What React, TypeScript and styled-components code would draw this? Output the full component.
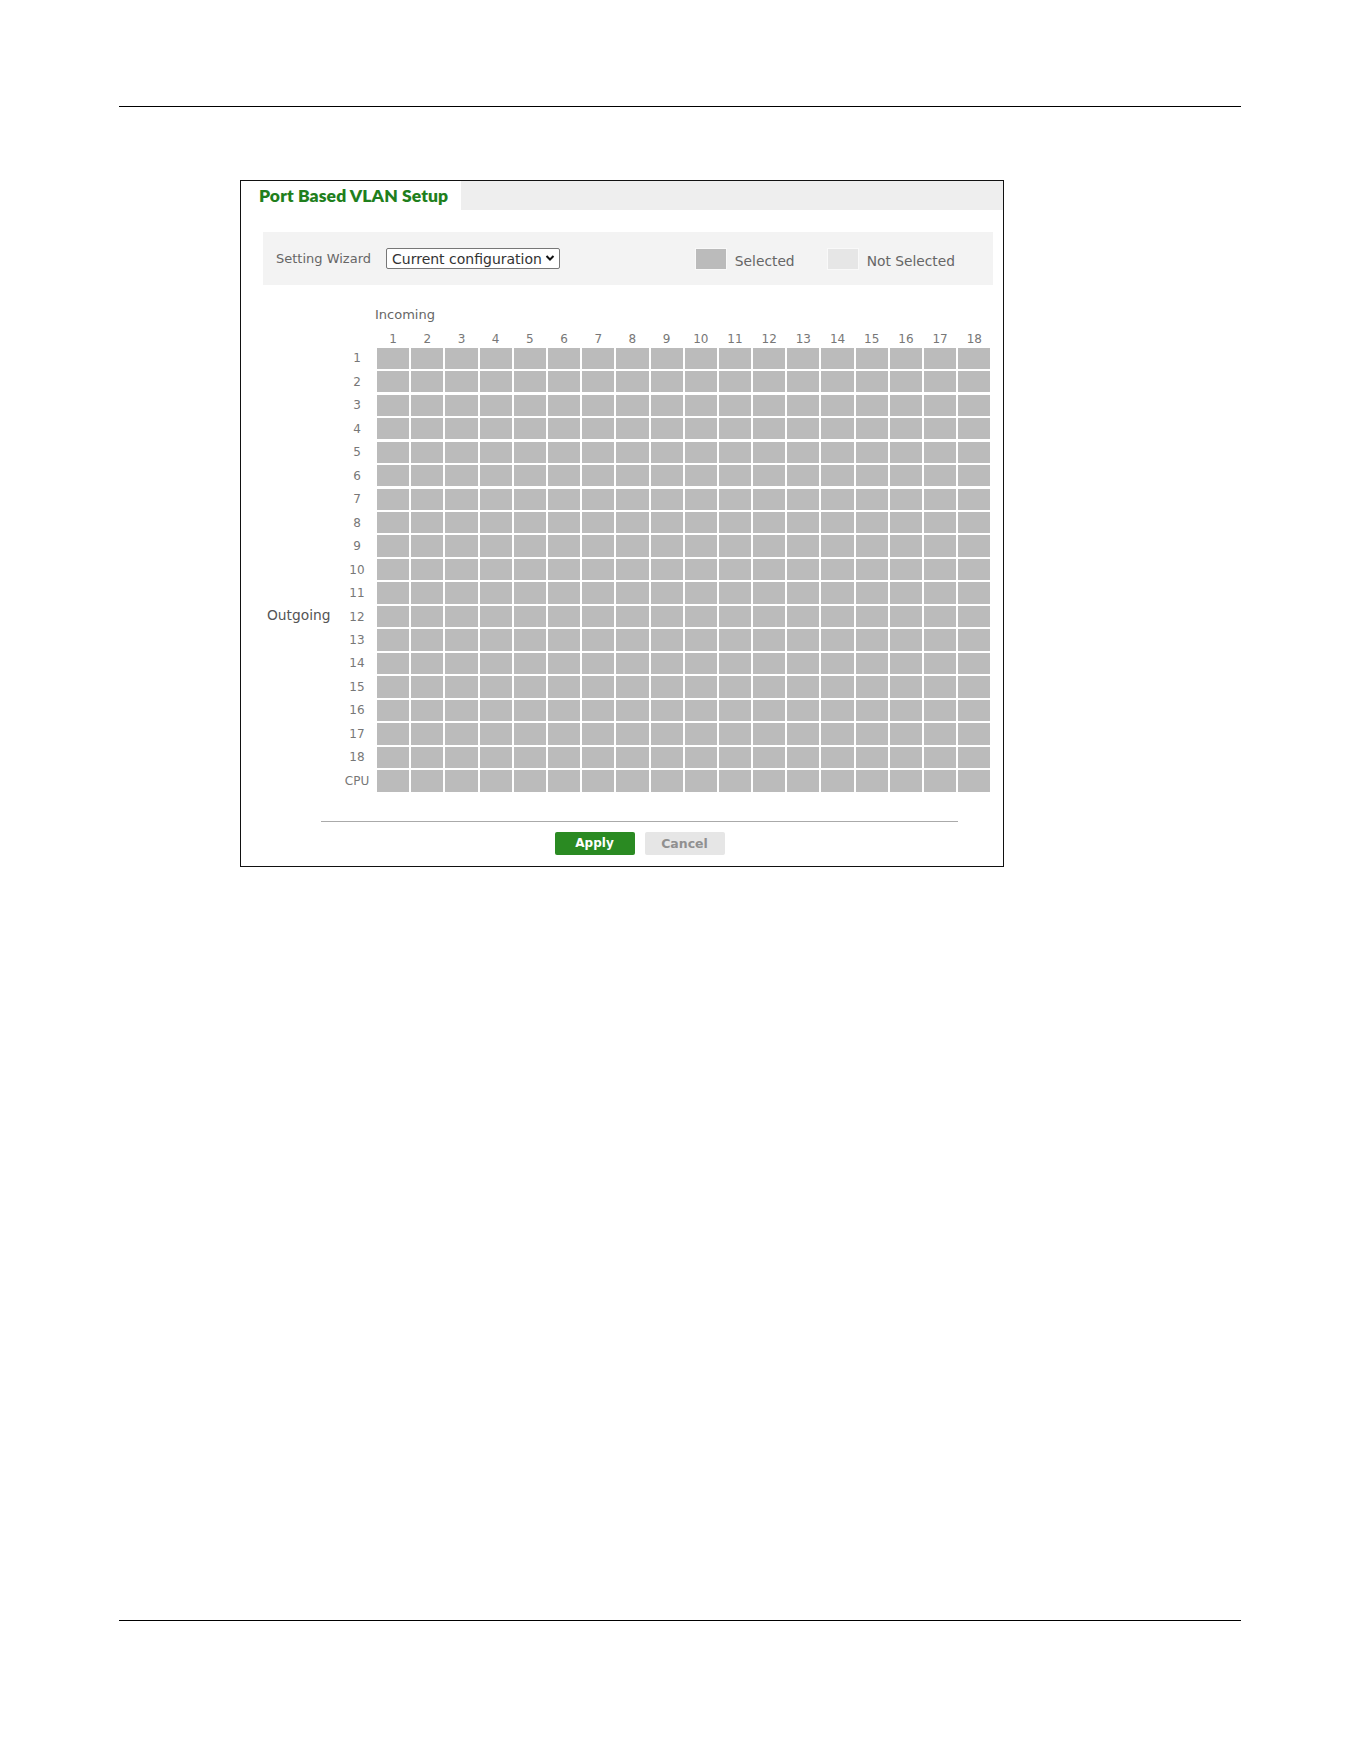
import React from "react";
import styled, { createGlobalStyle } from "styled-components";

const GlobalStyle = createGlobalStyle`
    body {
        margin: 0;
        background: #fff;
        font-family: "DejaVu Sans", "Liberation Sans", sans-serif;
    }
`;

const Page = styled.div`
    width: 1122px;
    margin-left: 119px;
    padding-top: 106px;
`;

const Rule = styled.div<{ $gap?: number }>`
    height: 1px;
    background: #000;
    margin-top: ${props => props.$gap ?? 0}px;
`;

const Panel = styled.section`
    box-sizing: border-box;
    width: 764px;
    height: 687px;
    margin: 73px 0 0 121px;
    border: 1px solid #111;
    display: flex;
    flex-direction: column;
`;

const TabBar = styled.div`
    display: flex;
    height: 29px;
    background: #eeeeee;
`;

const Tab = styled.div`
    width: 220px;
    box-sizing: border-box;
    padding-left: 18px;
    background: #fff;
    display: flex;
    align-items: center;
`;

const Title = styled.h1`
    margin: 0;
    font-family: Lato, "DejaVu Sans", sans-serif;
    font-size: 17.5px;
    font-weight: 800;
    color: #1f7f1d;
    letter-spacing: 0.1px;
`;

const Wizard = styled.div`
    display: flex;
    align-items: center;
    height: 53px;
    margin: 22px 10px 0 22px;
    padding-left: 13px;
    background: #f3f3f3;
`;

const Label = styled.span`
    font-size: 13px;
    color: #666;
`;

const SelectWrap = styled.div`
    position: relative;
    margin-left: 15px;
    width: 174px;
    height: 21px;
`;

const Select = styled.select`
    appearance: none;
    box-sizing: border-box;
    width: 100%;
    height: 100%;
    margin: 0;
    padding: 0 0 0 5px;
    border: 1px solid #777;
    border-radius: 2px;
    background: #fff;
    font-family: "DejaVu Sans", sans-serif;
    font-size: 14px;
    color: #333;
`;

const Chevron = styled.svg`
    position: absolute;
    right: 5px;
    top: 6px;
    pointer-events: none;
`;

const Legend = styled.div`
    margin-left: auto;
    padding-right: 38px;
    display: flex;
    align-items: center;
`;

const Swatch = styled.span<{ $on?: boolean }>`
    box-sizing: border-box;
    width: 32px;
    height: 22px;
    border: 1px solid #f9f9f9;
    background: ${props => props.$on ? "#bbbbbb" : "#e6e6e6"};
    margin: 0 8px 0 ${props => props.$on ? 0 : 32}px;
`;

const LegendText = styled(Label)`
    font-size: 13.8px;
    padding-top: 4px;
`;

const Matrix = styled.div`
    display: grid;
    grid-template-columns: 70px 36px repeat(18, 32.2px);
    grid-template-rows: 20px 18px repeat(19, 21.2px);
    column-gap: 2px;
    row-gap: 2.3px;
    margin: 20px 0 0 26px;
`;

const Slot = styled.div<{ $row: number; $col: number; $span?: number }>`
    grid-row: ${props => props.$row};
    grid-column: ${props => props.$col} / span ${props => props.$span ?? 1};
`;

const Incoming = styled(Slot)`
    font-size: 13px;
    color: #666;
    align-self: center;
    margin-left: -2px;
    margin-top: -2px;
`;

const Outgoing = styled(Slot)`
    font-size: 13.8px;
    color: #555;
    align-self: center;
    margin-top: -3px;
`;

const Num = styled(Slot)`
    font-size: 12px;
    color: #777;
    text-align: center;
    align-self: center;
    line-height: 14px;
`;

const ColHead = styled(Num)`
    align-self: end;
    margin-bottom: -1px;
`;

const Cell = styled(Slot)`
    background: #bbbbbb;
`;

const Footer = styled.div`
    margin: 29px 45px 0 80px;
    padding-top: 10px;
    border-top: 1px solid #aaa;
    display: flex;
    justify-content: center;
    gap: 10px;
`;

const Button = styled.button<{ $primary?: boolean }>`
    width: 80px;
    height: 23px;
    border: none;
    border-radius: 2px;
    font-family: "DejaVu Sans", sans-serif;
    font-size: ${props => props.$primary ? 12 : 12.5}px;
    font-weight: 700;
    color: ${props => props.$primary ? "#fff" : "#909090"};
    background: ${props => props.$primary ? "#2a8a22" : "#e6e6e6"};
`;

const ports = Array.from({ length: 18 }, (_, i) => i + 1);
const rows = [...ports.map(String), "CPU"];

export default function App() {
    return (
        <Page>
            <GlobalStyle />
            <Rule />
            <Panel>
                <TabBar>
                    <Tab><Title>Port Based VLAN Setup</Title></Tab>
                </TabBar>
                <Wizard>
                    <Label>Setting Wizard</Label>
                    <SelectWrap>
                        <Select defaultValue="current">
                            <option value="current">Current configuration</option>
                        </Select>
                        <Chevron width="10" height="8" viewBox="0 0 10 8">
                            <path d="M1.5 2 L5 5.5 L8.5 2" fill="none" stroke="#111" strokeWidth="2" />
                        </Chevron>
                    </SelectWrap>
                    <Legend>
                        <Swatch $on />
                        <LegendText>Selected</LegendText>
                        <Swatch />
                        <LegendText>Not Selected</LegendText>
                    </Legend>
                </Wizard>
                <Matrix>
                    <Incoming $row={1} $col={3} $span={6}>Incoming</Incoming>
                    {ports.map(p => (
                        <ColHead key={"h" + p} $row={2} $col={p + 2}>{p}</ColHead>
                    ))}
                    <Outgoing $row={14} $col={1}>Outgoing</Outgoing>
                    {rows.map((r, ri) => (
                        <React.Fragment key={r}>
                            <Num $row={ri + 3} $col={2}>{r}</Num>
                            {ports.map(p => (
                                <Cell key={p} $row={ri + 3} $col={p + 2} />
                            ))}
                        </React.Fragment>
                    ))}
                </Matrix>
                <Footer>
                    <Button $primary>Apply</Button>
                    <Button>Cancel</Button>
                </Footer>
            </Panel>
            <Rule $gap={753} />
        </Page>
    );
}
